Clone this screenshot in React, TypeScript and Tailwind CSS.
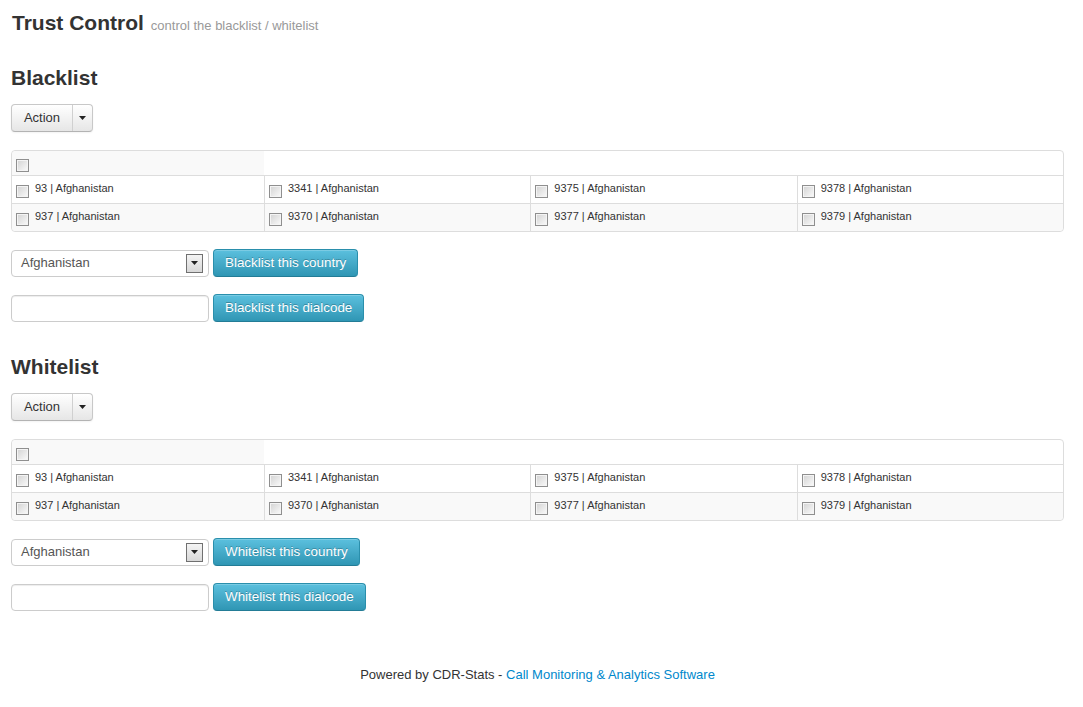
import React from 'react';

const rows = [
  ['93', '3341', '9375', '9378'],
  ['937', '9370', '9377', '9379'],
];

const Checkbox: React.FC = () => (
  <span className="inline-block w-[13px] h-[13px] shrink-0 border border-[#8f8f8f] bg-white">
    <span className="block w-full h-full border border-[#f4f4f4] bg-linear-to-br from-[#d6d6d6] to-[#f7f7f7]" />
  </span>
);

const Caret: React.FC = () => (
  <svg width="7" height="4" viewBox="0 0 7 4" className="block">
    <path d="M0 0h7L3.5 4z" fill="#222" />
  </svg>
);

const ActionButton: React.FC = () => (
  <div className="flex h-[28px] w-[82px] rounded-[4px] border border-[#c8c8c8] border-b-[#b3b3b3] bg-linear-to-b from-white to-[#e6e6e6] shadow-[0_1px_2px_rgba(0,0,0,0.05)] text-[13px] text-[#333]">
    <div className="flex w-[60px] items-center justify-center">Action</div>
    <div className="w-px bg-[#d0d0d0]" />
    <div className="flex flex-1 items-center justify-center">
      <Caret />
    </div>
  </div>
);

const CodeTable: React.FC = () => (
  <div className="w-[1053px] rounded-[4px] border border-[#dddddd] text-[11px] text-[#333] leading-[13px]">
    <div className="flex h-[25px] border-b border-[#dddddd]">
      <div className="w-[252px] rounded-tl-[4px] bg-[#f9f9f9] pl-[4px] pt-[8px]">
        <Checkbox />
      </div>
    </div>
    {rows.map((row, i) => (
      <div
        key={i}
        className={`grid grid-cols-[252px_1fr_1fr_1fr] ${i === 0 ? 'h-[28px] border-b border-[#dddddd]' : 'h-[27px] bg-[#f9f9f9] rounded-b-[4px]'}`}
      >
        {row.map((code, j) => (
          <div key={code} className={`flex items-start gap-[6px] pl-[4px] ${j > 0 ? 'border-l border-[#dddddd]' : ''}`}>
            <span className="mt-[9px] flex">
              <Checkbox />
            </span>
            <span className="mt-[6px]">{code} | Afghanistan</span>
          </div>
        ))}
      </div>
    ))}
  </div>
);

const InfoButton: React.FC<{ label: string }> = ({ label }) => (
  <button className="h-[28px] rounded-[4px] border border-[#2a8fac] border-b-[#237c96] bg-linear-to-b from-[#5bc0de] to-[#2f96b4] px-[11px] text-[13.4px] text-white [text-shadow:0_-1px_0_rgba(0,0,0,0.25)] shadow-[inset_0_1px_0_rgba(255,255,255,0.2)]">
    {label}
  </button>
);

const ListSection: React.FC<{ name: string; verb: string }> = ({ name, verb }) => (
  <section className="flex flex-col">
    <h2 className="text-[21px] font-bold leading-[24px] text-[#333]">{name}</h2>
    <div className="mt-[14px]">
      <ActionButton />
    </div>
    <div className="mt-[18px]">
      <CodeTable />
    </div>
    <div className="mt-[17px] flex items-center gap-[4px]">
      <div className="flex h-[27px] w-[198px] items-center justify-between rounded-[4px] border border-[#cccccc] bg-white pl-[9px] pr-[5px] text-[13px] text-[#555]">
        <span>Afghanistan</span>
        <span className="flex h-[19px] w-[17px] items-center justify-center border border-[#707070] bg-linear-to-b from-[#f4f4f4] to-[#d8d8d8]">
          <Caret />
        </span>
      </div>
      <InfoButton label={`${verb} this country`} />
    </div>
    <div className="mt-[17px] flex items-center gap-[4px]">
      <input className="h-[27px] w-[198px] rounded-[4px] border border-[#cccccc] bg-white shadow-[inset_0_1px_1px_rgba(0,0,0,0.075)] outline-none" />
      <InfoButton label={`${verb} this dialcode`} />
    </div>
  </section>
);

export default function App() {
  return (
    <div className="min-h-[707px] w-[1083px] bg-white pl-[11px] pt-[11px] text-[#333]" style={{ fontFamily: '"Liberation Sans", Arial, sans-serif' }}>
      <div className="w-[1053px]">
        <h1 className="ml-px flex items-baseline gap-[7px] leading-[24px]">
          <span className="text-[21px] font-bold text-[#333]">Trust Control</span>
          <span className="text-[13px] text-[#999]">control the blacklist / whitelist</span>
        </h1>

        <div className="mt-[28px]">
          <ListSection name="Blacklist" verb="Blacklist" />
        </div>
        <div className="mt-[33px]">
          <ListSection name="Whitelist" verb="Whitelist" />
        </div>

        <footer className="mt-[54px] text-center text-[13px] leading-[20px]">
          Powered by CDR-Stats - <a className="text-[#0088cc]">Call Monitoring &amp; Analytics Software</a>
        </footer>
      </div>
    </div>
  );
}
